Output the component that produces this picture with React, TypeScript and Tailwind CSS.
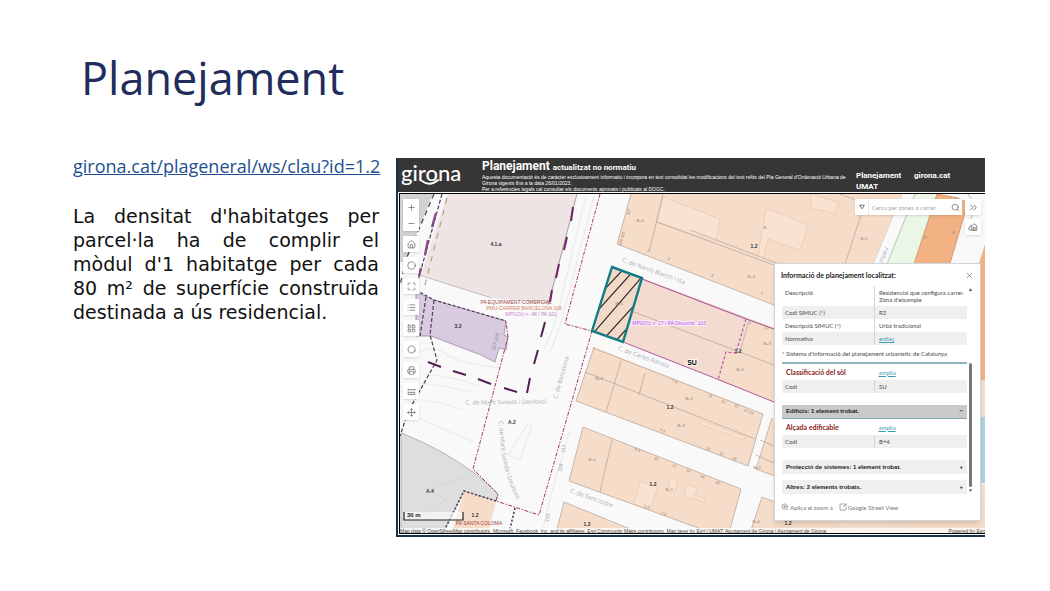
import type { ReactNode } from "react";
import {
  ChevronsRight,
  Circle,
  Hexagon,
  House,
  LayoutGrid,
  List,
  Maximize,
  Minus,
  Move,
  Plus,
  Printer,
  Search,
  SquareArrowOutUpRight,
  X,
  ZoomIn,
} from "lucide-react";

type Point = [number, number];

interface MapLabel {
  text: string;
  at: Point;
  rotate?: number;
}

interface InfoRow {
  name: string;
  value: ReactNode;
  shaded?: boolean;
}

const BLOCKS: string[] = [
  "631,194 902,194 873,264 873,345 774,305 617,244",
  "594,347 763,414 748,466 576,401",
  "583,427 741,489 729,533 712,533 569,481",
  "564,502 640,533 556,533",
  "464,491 496,502 488,533 452,533",
  "772,418 985,500 985,560 756,469",
  "762,497 860,533 750,533",
];

const COURTYARDS: string[] = [
  "663,197 720,219 716,242 657,222",
  "766,208 808,225 800,250 768,239 762,262 757,262",
  "810,194 839,202 835,214 812,208",
  "700,420 745,437 744,440 700,424",
  "640,481 658,487 650,510 634,504",
  "686,484 697,488 694,500 684,496",
  "694,494 705,499 704,503 693,498",
  "670,478 678,481 674,494 668,490",
];

const PARCEL_LINES: string[] = [
  "M631 194 617 244 774 305",
  "M663 195 649 252",
  "M657 222 774 265",
  "M690 230 800 272",
  "M840 194 856 200",
  "M866 200 845 264",
  "M642 279 774 329",
  "M634 312 774 365",
  "M748 323 740 352",
  "M593 348 763 414 748 466",
  "M585 372 755 439",
  "M594 347 576 401 748 466",
  "M621 361 606 412",
  "M645 373 639 395",
  "M583 427 741 489 729 533",
  "M583 427 569 481 712 533",
  "M612 440 600 492",
  "M564 502 640 533",
  "M564 502 556 533",
  "M772 418 756 469 780 478",
  "M762 497 750 533",
  "M762 497 800 511",
  "M760 440 774 446",
  "M756 455 774 463",
];

const ZONES: MapLabel[] = [
  { text: "4.1.a", at: [496, 246] },
  { text: "3.2", at: [458, 328] },
  { text: "1.2", at: [754, 248] },
  { text: "1.2", at: [738, 353] },
  { text: "1.2", at: [670, 409] },
  { text: "1.2", at: [653, 486] },
  { text: "1.2", at: [587, 526] },
  { text: "1.2", at: [475, 517] },
  { text: "1.2", at: [788, 525] },
  { text: "A.2", at: [512, 424] },
  { text: "A.4", at: [430, 493] },
];

const STREETS: MapLabel[] = [
  { text: "C. de Narcís Blanch i Illa", at: [653, 273], rotate: 20 },
  { text: "C. de Carles Rahola", at: [643, 359], rotate: 20 },
  { text: "C. de Martí Sureda i Deulovol", at: [506, 404], rotate: -1 },
  { text: "C. de Barcelona", at: [563, 378], rotate: -74 },
  { text: "C. de Sant Isidre", at: [591, 500], rotate: 20 },
  { text: "Pompeu", at: [884, 259], rotate: -68 },
];

const HEIGHTS: MapLabel[] = [
  { text: "B+4", at: [640, 222] },
  { text: "B", at: [765, 229] },
  { text: "B+3", at: [751, 278] },
  { text: "B+2", at: [864, 240] },
  { text: "III", at: [925, 239] },
  { text: "III", at: [953, 234] },
  { text: "B+3", at: [767, 345] },
  { text: "B+3", at: [740, 371] },
  { text: "B+4", at: [599, 380] },
  { text: "B+3", at: [689, 400] },
  { text: "B+3", at: [681, 427] },
  { text: "B+4", at: [592, 461] },
  { text: "B+3", at: [669, 491] },
  { text: "B+4", at: [756, 523] },
  { text: "B+4", at: [757, 469] },
  { text: "B+4", at: [619, 305] },
  { text: "107", at: [630, 212], rotate: -75 },
  { text: "109-111", at: [623, 239], rotate: -75 },
  { text: "2", at: [648, 252], rotate: 20 },
  { text: "3", at: [668, 260], rotate: 20 },
  { text: "5", at: [712, 277], rotate: 20 },
  { text: "7", at: [761, 295], rotate: 20 },
  { text: "11", at: [749, 324], rotate: 20 },
  { text: "13", at: [766, 329], rotate: 20 },
  { text: "7-9", at: [674, 383], rotate: 20 },
  { text: "11", at: [710, 397], rotate: 20 },
  { text: "13", at: [723, 403], rotate: 20 },
  { text: "15", at: [736, 407], rotate: 20 },
  { text: "17-19", at: [748, 413], rotate: 20 },
  { text: "7-9", at: [662, 432], rotate: 20 },
  { text: "11", at: [708, 450], rotate: 20 },
  { text: "13", at: [721, 455], rotate: 20 },
  { text: "15", at: [734, 460], rotate: 20 },
  { text: "6-8", at: [637, 451], rotate: 20 },
  { text: "10", at: [656, 460], rotate: 20 },
  { text: "12", at: [674, 467], rotate: 20 },
  { text: "14", at: [688, 472], rotate: 20 },
  { text: "16", at: [702, 478], rotate: 20 },
  { text: "20", at: [717, 484], rotate: 20 },
  { text: "3-5", at: [646, 508], rotate: 20 },
  { text: "7-9", at: [663, 515], rotate: 20 },
];

const PLAN_ROWS: InfoRow[] = [
  {
    name: "Descripció",
    value: (
      <>
        Residencial que configura carrer.
        <br />
        Zona d'eixample
      </>
    ),
  },
  { name: "Codi SIMUC (*)", value: "R2", shaded: true },
  { name: "Descripció SIMUC (*)", value: "Urbà tradicional" },
  { name: "Normativa", value: <InfoLink>enllaç</InfoLink>, shaded: true },
];

const TOOLS = [
  { label: "Inici", Icon: House },
  { label: "Ubicació", Icon: Circle },
  { label: "Pantalla completa", Icon: Maximize },
  { label: "Llegenda", Icon: List },
  { label: "Mapes base", Icon: LayoutGrid },
  { label: "Capes", Icon: Hexagon },
  { label: "Imprimir", Icon: Printer },
  { label: "Mesurar", Icon: RulerIcon },
  { label: "Coordenades", Icon: Move },
];

function RulerIcon({ className }: { className?: string }) {
  return (
    <svg viewBox="0 0 24 24" fill="none" stroke="currentColor" strokeWidth="2" className={className}>
      <path d="M3 14h18v6H3zM8 14v3M12 14v3M16 14v3M3 5v5M21 5v5M3 7h18" />
    </svg>
  );
}

function BuildingIcon({ className }: { className?: string }) {
  return (
    <svg viewBox="0 0 24 24" fill="none" stroke="currentColor" strokeWidth="2" strokeLinejoin="round" className={className}>
      <path d="M9 19H5a3 3 0 0 1-1-6 5 5 0 0 1 5-5M9 20V9l5-5 7 5v11zM13 20v-7h4v7" />
    </svg>
  );
}

function InfoLink({ children }: { children: ReactNode }) {
  return (
    <a href="#enllac" className="text-[#3a9bb8] underline">
      {children}
    </a>
  );
}

function Labels({ items, className }: { items: MapLabel[]; className: string }) {
  return (
    <g className={className} textAnchor="middle">
      {items.map(({ text, at: [x, y], rotate = 0 }) => (
        <text key={`${text}-${x}-${y}`} x={x} y={y} transform={`rotate(${rotate} ${x} ${y})`}>
          {text}
        </text>
      ))}
    </g>
  );
}

function CityMap() {
  return (
    <svg
      viewBox="400 194 585 339"
      className="block w-full h-auto bg-[#f9f9fa] font-['Liberation_Sans',sans-serif]"
      role="img"
      aria-label="Plànol de planejament"
    >
      <defs>
        <clipPath id="parcel">
          <path d="M612 267 642 278 623 342 592 331Z" />
        </clipPath>
        <path id="marti-curve" d="M499 421C500 450 504 475 517 500" />
      </defs>

      <path d="M400 194H433L405 262H400Z" fill="#d2d2d2" />
      <path d="M447 194H577L550 304 492 298 421 275Z" fill="#efe4e4" />
      <path d="M419 275 492 298" stroke="#a9a0a4" strokeWidth=".7" />
      <path d="M577 194 548 305" stroke="#8a8088" strokeWidth=".7" />

      <g fill="none" stroke="#e9ebec" strokeWidth="1.2">
        <path d="M419 352Q434 345 446 354T500 368" />
        <path d="M422 374Q450 376 480 386M418 383Q450 386 474 393M420 400Q445 402 462 410" />
        <path d="M594 196 566 303Q560 330 550 352M586 196 560 303Q554 330 544 350" />
        <path d="M529 422 508 455 520 460 532 425M405 412Q440 428 474 442" />
        <path d="M570 430 548 505M550 500 542 533" />
      </g>

      {/* public facilities */}
      <path
        d="M416 292 434 300 506 321 504 335 508 337 506 350 499 348 495 362 481 355 431 336H416Z"
        fill="#d9cadf"
        stroke="#9b8ba5"
        strokeWidth=".8"
      />
      <path
        d="M401 433C437 447 474 469 498 494L496 501 464 491 443 533H401Z"
        fill="#dedede"
        stroke="#a7a2a6"
        strokeWidth=".8"
      />
      <path d="M400 520 420 518 446 500 430 490 480 470" fill="none" stroke="#d3d3d3" strokeWidth=".8" />

      {/* right-hand side avenue */}
      <path d="M915 194H937L914 264H887Z" fill="#eaf7e6" />
      <path d="M937 194 958 198 968 203 948 270H912Z" fill="#f3b283" stroke="#b98460" strokeWidth=".7" />
      <path d="M902 194 873 264M915 194 887 264M968 194 976 206 968 226" fill="none" stroke="#9c9c9c" strokeWidth=".6" />
      <path d="M985 244 979 263V400H985Z" fill="#f3b283" />
      <path d="M978 380H985V417H978ZM978 484H985V533H860L978 521Z" fill="#f5dfd0" />
      <path d="M978 417H985V483H978Z" fill="#a9d3e8" />
      <path d="M770 519H985V533H782Z" fill="#f5dfd0" />

      {BLOCKS.map((points) => (
        <polygon key={points} points={points} fill="#f6ddc9" />
      ))}
      <path d="M642 278 748 318 740 352 734 352 720 380 623 342Z" fill="#f4dbd0" />
      <path d="M748 318 790 334V408L717 380 728 352 740 352Z" fill="#f6ddc9" />
      {COURTYARDS.map((points) => (
        <polygon key={points} points={points} fill="#f9e3d0" stroke="#e3c5ae" strokeWidth=".6" />
      ))}
      <g fill="none" stroke="#b3a194" strokeWidth=".7">
        {PARCEL_LINES.map((d) => (
          <path key={d} d={d} />
        ))}
      </g>

      {/* sector boundaries */}
      <g fill="none" stroke="#a33668" strokeWidth="1" strokeDasharray="4 1.5 1.5 1.5">
        <path d="M600 194 565 324 592 331 539 515 496 501 498 494 473 469 508 337 506 321" />
      </g>
      <g fill="none" stroke="#b557a0" strokeWidth="1">
        <path d="M642 279 746 319 774 329M623 342 717 379 774 402" />
        <path d="M746 319 736 353 726 352 718 380" strokeDasharray="3 2" strokeWidth="1.2" />
      </g>
      <g fill="none" stroke="#4f3b55" strokeWidth="1.2" strokeDasharray="4 2">
        <path d="M434 194 407 257 400 285" strokeDasharray="5 4" />
        <path d="M442 194 419 277 416 290" />
        <path d="M416 290 434 300 506 321" strokeDasharray="3 2" />
        <path d="M434 300 430 335 437 360 408 412 400 436" />
        <path d="M426 297 420 336" />
        <path d="M496 501 464 491 443 533M515 508 509 533" strokeDasharray="2 2" strokeWidth="1.6" />
      </g>
      <path d="M447 198 425 285" stroke="#a9a37c" strokeWidth="1.1" strokeDasharray="6 6" />
      <path d="M436 213 432 227M428 240 425 255M421 268 419 276" stroke="#8b4b8c" strokeWidth="2.4" />
      <path
        d="M573 207 571 221M567 237 564 250M559 264 556 278M552 290 550 302"
        stroke="#6d2365"
        strokeWidth="2"
      />
      <path
        d="M545 322 541 337M538 350 534 364M530 378 527 393M517 392 504 388M491 384 478 379M466 375 453 371M441 367 428 362"
        stroke="#551f56"
        strokeWidth="2"
      />

      {/* selected parcel */}
      <path d="M612 267 642 278 623 342 592 331Z" fill="#f3d9c8" />
      <g clipPath="url(#parcel)" stroke="#2a2a2a" strokeWidth="1.2">
        <path d="M590 305 632 260M590 319 646 257M590 337 648 270M600 343 650 288M612 345 652 301" />
      </g>
      <path d="M612 267 642 278 623 342 592 331Z" fill="none" stroke="#0f7c86" strokeWidth="2.4" />

      <Labels items={STREETS} className="fill-[#a9adb2] text-[6px] font-['Open_Sans',sans-serif]" />
      <text className="fill-[#a9adb2] text-[6px] font-['Open_Sans',sans-serif]">
        <textPath href="#marti-curve">C. de Martí Sureda i Deulovol</textPath>
      </text>
      <Labels items={HEIGHTS} className="fill-[#8f8176] text-[4px]" />
      <Labels items={ZONES} className="fill-[#333] text-[5px] font-bold" />
      <g textAnchor="middle" className="text-[5px]">
        <text x="516" y="304" fill="#a14a4a">PA EQUIPAMENT COMERCIAL</text>
        <text x="524" y="310" fill="#d9805f">PMU-CARRER BARCELONA 106</text>
        <text x="531" y="316" fill="#c77fd0">MPGOU n. 48 / PA 101</text>
        <text x="479" y="525" fill="#a63a3a">PA SANTA COLOMA</text>
        <text x="669" y="325" fill="#b94bd6" stroke="#fbeefc" strokeWidth="2" paintOrder="stroke">
          MPGOU n. 17 / PA Disconfo. 103
        </text>
        <text x="497" y="342" fill="#96869d" transform="rotate(-75 497 342)">117-119</text>
        <text x="565" y="449" fill="#999" transform="rotate(-75 565 449)">117</text>
        <text x="562" y="468" fill="#999" transform="rotate(-75 562 468)">119</text>
        <text x="549" y="518" fill="#999" transform="rotate(-75 549 518)">123</text>
      </g>
      <text x="692" y="365" textAnchor="middle" className="fill-black text-[7px] font-bold" stroke="#fff" strokeWidth="2" paintOrder="stroke">
        SU
      </text>

      <path d="M404 512V520H463V512" fill="#ffffff99" stroke="#222" strokeWidth="1.2" />
      <text x="407" y="517" className="fill-[#222] text-[6px] font-bold">30 m</text>
    </svg>
  );
}

function ToolButton({ label, children }: { label: string; children: ReactNode }) {
  return (
    <button
      type="button"
      aria-label={label}
      className="flex h-4 w-4 items-center justify-center bg-white text-[#6e6e6e] shadow-sm"
    >
      {children}
    </button>
  );
}

function Toolbar() {
  return (
    <div className="absolute left-[3px] top-[5px] flex flex-col gap-[5px]">
      <div className="flex flex-col">
        <ToolButton label="Apropar"><Plus className="size-[9px]" /></ToolButton>
        <ToolButton label="Allunyar"><Minus className="size-[9px]" /></ToolButton>
      </div>
      {TOOLS.map(({ label, Icon }) => (
        <ToolButton key={label} label={label}>
          <Icon className="size-[9px]" />
        </ToolButton>
      ))}
    </div>
  );
}

function SearchBar() {
  return (
    <div className="absolute right-1 top-[5px] flex gap-[3px]">
      <div className="flex h-4 w-[107px] items-center bg-white text-[#6e6e6e] shadow-sm">
        <button type="button" aria-label="Cercar a" className="flex h-full w-[14px] items-center justify-center border-r border-gray-200">
          <svg viewBox="0 0 10 10" className="size-[6px]" fill="none" stroke="currentColor" strokeWidth="1.6">
            <path d="M1 2h8L5 8z" />
          </svg>
        </button>
        <input
          type="text"
          aria-label="Cerca per zones o carrer"
          placeholder="Cerca per zones o carrer"
          className="h-full min-w-0 flex-1 pl-[3px] font-['Lato',sans-serif] text-[6px] outline-none placeholder:text-[#a3a3a3]"
        />
        <button type="button" aria-label="Cercar" className="flex h-full w-[14px] items-center justify-center">
          <Search className="size-[9px]" />
        </button>
      </div>
      <div className="flex flex-col gap-1">
        <ToolButton label="Obrir"><ChevronsRight className="size-[11px]" /></ToolButton>
        <ToolButton label="Edificis"><BuildingIcon className="size-[10px]" /></ToolButton>
      </div>
    </div>
  );
}

function InfoTable({ rows }: { rows: InfoRow[] }) {
  return (
    <table className="w-full table-fixed border-collapse text-left">
      <tbody>
        {rows.map(({ name, value, shaded }) => (
          <tr key={name} className={shaded ? "bg-[#efefef]" : ""}>
            <th scope="row" className="w-1/2 px-[3px] py-[3px] align-top font-normal">
              {name}
            </th>
            <td className="whitespace-nowrap border-l border-gray-300 py-[3px] pl-1 align-top">{value}</td>
          </tr>
        ))}
      </tbody>
    </table>
  );
}

function SectionTitle({ children }: { children: ReactNode }) {
  return (
    <div className="flex h-4 items-center">
      <h4 className="w-1/2 pl-1 text-[7px] font-bold leading-none text-[#8b1a1a]">{children}</h4>
      <span className="pl-1"><InfoLink>amplia</InfoLink></span>
    </div>
  );
}

function Accordion({ title, open }: { title: string; open?: boolean }) {
  return (
    <button
      type="button"
      aria-expanded={!!open}
      className={
        "flex h-[14px] w-full items-center justify-between px-1 text-left font-['Liberation_Sans',sans-serif] text-[6px] font-bold text-[#222] " +
        (open ? "bg-[#c9c9c9] border-b border-[#7fa9b5]" : "bg-[#f0f0f0]")
      }
    >
      <span>{title}</span>
      <span>{open ? "−" : "+"}</span>
    </button>
  );
}

function InfoPanel() {
  return (
    <section className="absolute right-1 top-[69px] w-[207px] border border-gray-300 bg-white font-['Lato',sans-serif] text-[6px] leading-[7px] text-[#4a4a4a] shadow-md">
      <div className="flex h-[22px] items-center justify-between px-[6px]">
        <h3 className="text-[7px] font-bold text-[#222]">Informació de planejament localitzat:</h3>
        <button type="button" aria-label="Tancar"><X className="size-[9px]" strokeWidth={1.5} /></button>
      </div>

      <div className="flex">
        <div className="w-[192px] pl-[7px]">
          <InfoTable rows={PLAN_ROWS} />
          <p className="py-[5px]">* Sistema d'informació del planejament urbanístic de Catalunya</p>
          <div className="border-t-2 border-[#8fb3bf]">
            <SectionTitle>Classificació del sòl</SectionTitle>
            <InfoTable rows={[{ name: "Codi", value: "SU", shaded: true }]} />
          </div>
          <div className="pt-3">
            <Accordion title="Edificis: 1 element trobat." open />
            <SectionTitle>Alçada edificable</SectionTitle>
            <InfoTable rows={[{ name: "Codi", value: "B+4", shaded: true }]} />
          </div>
          <div className="flex flex-col gap-[6px] pt-3">
            <Accordion title="Protecció de sistemes: 1 element trobat." />
            <Accordion title="Altres: 2 elements trobats." />
          </div>
        </div>
        <div className="flex w-[7px] flex-col items-center justify-between text-[5px] text-[#555]">
          <span>▲</span>
          <span className="mt-auto h-[124px] w-[3px] rounded-full bg-[#777]" />
          <span>▼</span>
        </div>
      </div>

      <div className="flex h-[26px] items-center gap-[6px] pl-[6px] text-[#777]">
        <button type="button" className="flex items-center gap-px">
          <ZoomIn className="size-[8px]" /> Aplica el zoom a
        </button>
        <button type="button" className="flex items-center gap-px">
          <SquareArrowOutUpRight className="size-[8px]" /> Google Street View
        </button>
      </div>
    </section>
  );
}

function MapHeader() {
  return (
    <header className="flex h-[34px] bg-[#363636] pl-[3px] font-['Roboto',sans-serif] text-white">
      <div className="relative w-[81px] shrink-0">
        <span className="font-['Lato',sans-serif] text-[22px] font-medium leading-[29px]">girona</span>
        <svg viewBox="0 0 20 8" className="absolute left-[19px] top-[21px] h-[8px] w-[20px]" fill="none" stroke="currentColor" strokeWidth="2" strokeLinecap="round">
          <path d="M2 2Q10 8 18 1" />
        </svg>
      </div>
      <div className="min-w-0 flex-1 pt-[2px]">
        <h2 className="text-[12px] font-bold leading-[13px]">
          Planejament <span className="text-[8px]">actualitzat no normatiu</span>
        </h2>
        <p className="whitespace-nowrap font-['Liberation_Sans',sans-serif] text-[5px] leading-[6px]">
          Aquesta documentació és de caràcter exclusivament informatiu i incorpora en text consolidat les modificacions del text refós del Pla General d'Ordenació Urbana de
          <br />
          Girona vigents fins a la data 26/01/2023.
          <br />
          Per a referències legals cal consultar els documents aprovats i publicats al DOGC.
        </p>
      </div>
      <nav className="flex w-[129px] shrink-0 gap-[10px] pt-3 text-[8px] font-bold leading-[11px]">
        <a href="#umat" className="w-12">Planejament UMAT</a>
        <a href="#girona">girona.cat</a>
      </nav>
    </header>
  );
}

function MapViewer() {
  return (
    <div className="min-w-0 flex-1 border-b-2 border-l-2 border-[#17324d] bg-white">
      <MapHeader />
      <div className="relative mb-px ml-px mt-px overflow-hidden border-y border-l border-black">
        <CityMap />
        <div className="absolute inset-x-0 bottom-0 flex h-[5px] justify-between overflow-hidden whitespace-nowrap bg-white/70 font-['Liberation_Sans',sans-serif] text-[5px] leading-[6px] text-[#444]">
          <span>
            Map data © OpenStreetMap contributors, Microsoft, Facebook, Inc. and its affiliates, Esri Community Maps contributors, Map layer by Esri | UMAT, Ajuntament de Girona | Ajuntament de Girona
          </span>
          <span>Powered by Esri</span>
        </div>
        <Toolbar />
        <SearchBar />
        <InfoPanel />
      </div>
    </div>
  );
}

export default function App() {
  return (
    <main className="min-h-screen bg-white pl-[73px] pr-[65px] pt-12">
      <h1 className="pl-2 font-['Open_Sans',sans-serif] text-[45px] leading-[60px] text-[#1f2d5c]">
        Planejament
      </h1>
      <div className="flex items-start gap-[17px] pt-[50px]">
        <div className="w-[306px] shrink-0">
          <a
            href="https://girona.cat/plageneral/ws/clau?id=1.2"
            className="block whitespace-nowrap font-['Open_Sans',sans-serif] text-[18px] leading-4 text-[#1d4f91] underline"
          >
            girona.cat/plageneral/ws/clau?id=1.2
          </a>
          <p className="pt-[30px] text-justify font-['DejaVu_Sans',sans-serif] text-[19px] leading-6 text-[#111]">
            La densitat d'habitatges per parcel·la ha de complir el mòdul d'1 habitatge per cada 80 m² de superfície construïda destinada a ús residencial.
          </p>
        </div>
        <MapViewer />
      </div>
    </main>
  );
}
